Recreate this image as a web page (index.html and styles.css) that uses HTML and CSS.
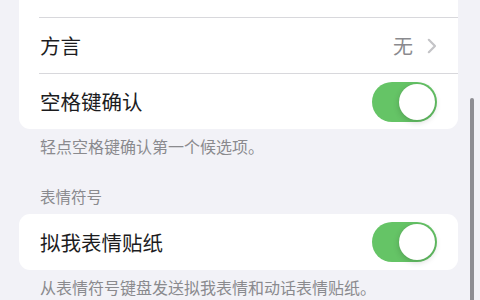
FILE: index.html
```html
<!DOCTYPE html>
<html lang="zh-CN">
<head>
<meta charset="utf-8">
<link rel="stylesheet" href="styles.css">
</head>
<body>
<div class="page">
  <div class="card card-top">
    <div class="row"></div>
    <div class="row">
      <span class="label">方言</span>
      <span class="detail">
        <span class="value">无</span>
        <svg class="chev" width="10" height="16" viewBox="0 0 10 16"><polyline points="1.8,1.8 8,8 1.8,14.2" fill="none" stroke="#c4c4c7" stroke-width="2.2" stroke-linecap="round" stroke-linejoin="round"/></svg>
      </span>
    </div>
    <div class="row">
      <span class="label">空格键确认</span>
      <span class="toggle"><span class="knob"></span></span>
    </div>
  </div>
  <p class="footer">轻点空格键确认第一个候选项。</p>
  <p class="header">表情符号</p>
  <div class="card">
    <div class="row">
      <span class="label">拟我表情贴纸</span>
      <span class="toggle"><span class="knob"></span></span>
    </div>
  </div>
  <p class="footer">从表情符号键盘发送拟我表情和动话表情贴纸。</p>
</div>
<div class="scrollbar"></div>
</body>
</html>
```
FILE: styles.css
```css
html, body {
  margin: 0;
  padding: 0;
}
body {
  width: 480px;
  height: 300px;
  overflow: hidden;
  background: #f2f2f7;
  font-family: "Noto Sans CJK SC", "Noto Sans", sans-serif;
  position: relative;
}
.page {
  padding: 0 22px 0 19px;
}
.card {
  background: #fff;
  border-radius: 11px;
  overflow: hidden;
}
.card-top {
  margin-top: -39px;
}
.row {
  height: 56px;
  display: flex;
  align-items: center;
  justify-content: space-between;
  padding: 0 21px 0 21px;
  position: relative;
  box-sizing: border-box;
}
.row + .row {
  border-top: 0.8px solid #d8d8dc;
  margin-left: 20px;
  padding-left: 1px;
}
.label {
  font-size: 20.5px;
  color: #1c1c1e;
  line-height: 1;
}
.detail {
  display: flex;
  align-items: center;
  gap: 14px;
}
.value {
  font-size: 20px;
  color: #8a8a8e;
  line-height: 1;
}
.chev {
  display: block;
}
.toggle {
  width: 65px;
  height: 40px;
  border-radius: 20px;
  background: #65c466;
  position: relative;
  flex: none;
}
.knob {
  position: absolute;
  top: 2px;
  right: 2px;
  width: 36px;
  height: 36px;
  border-radius: 50%;
  background: #fff;
  box-shadow: 0 2px 6px rgba(0,0,0,0.18), 0 0 1px rgba(0,0,0,0.1);
}
.footer {
  margin: 0;
  padding: 7px 21px 0 21px;
  font-size: 16px;
  line-height: 21px;
  color: #8a8a8e;
}
.header {
  margin: 0;
  padding: 29px 21px 7px 21px;
  font-size: 15.5px;
  line-height: 21px;
  color: #8a8a8e;
}
.scrollbar {
  position: absolute;
  left: 470px;
  top: 98px;
  width: 3.5px;
  height: 220px;
  border-radius: 2px;
  background: #8e8e93;
}
```
